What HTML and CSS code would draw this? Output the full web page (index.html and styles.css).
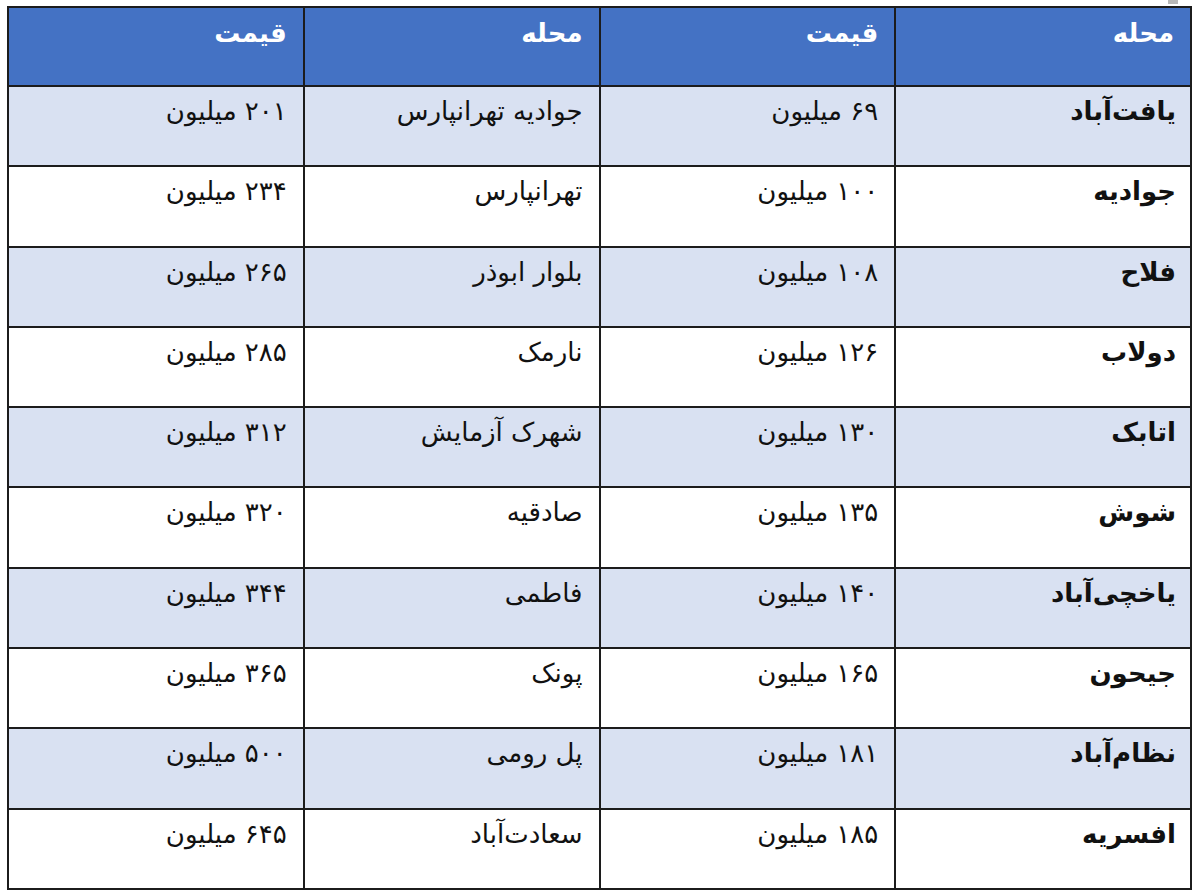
FILE: index.html
```html
<!DOCTYPE html>
<html lang="fa" dir="rtl">
<head>
<meta charset="utf-8">
<title>قیمت مسکن</title>
<link rel="stylesheet" href="styles.css">
</head>
<body>
<div class="page">
  <div class="corner-mark"></div>
  <table class="price-table">
    <thead>
      <tr class="head-row">
        <th>محله</th><th>قیمت</th><th>محله</th><th>قیمت</th>
      </tr>
    </thead>
    <tbody>
      <tr class="shaded"><td class="name">یافت‌آباد</td><td>۶۹ میلیون</td><td>جوادیه تهرانپارس</td><td>۲۰۱ میلیون</td></tr>
      <tr><td class="name">جوادیه</td><td>۱۰۰ میلیون</td><td>تهرانپارس</td><td>۲۳۴ میلیون</td></tr>
      <tr class="shaded"><td class="name">فلاح</td><td>۱۰۸ میلیون</td><td>بلوار ابوذر</td><td>۲۶۵ میلیون</td></tr>
      <tr><td class="name">دولاب</td><td>۱۲۶ میلیون</td><td>نارمک</td><td>۲۸۵ میلیون</td></tr>
      <tr class="shaded"><td class="name">اتابک</td><td>۱۳۰ میلیون</td><td>شهرک آزمایش</td><td>۳۱۲ میلیون</td></tr>
      <tr><td class="name">شوش</td><td>۱۳۵ میلیون</td><td>صادقیه</td><td>۳۲۰ میلیون</td></tr>
      <tr class="shaded"><td class="name">یاخچی‌آباد</td><td>۱۴۰ میلیون</td><td>فاطمی</td><td>۳۴۴ میلیون</td></tr>
      <tr><td class="name">جیحون</td><td>۱۶۵ میلیون</td><td>پونک</td><td>۳۶۵ میلیون</td></tr>
      <tr class="shaded"><td class="name">نظام‌آباد</td><td>۱۸۱ میلیون</td><td>پل رومی</td><td>۵۰۰ میلیون</td></tr>
      <tr><td class="name">افسریه</td><td>۱۸۵ میلیون</td><td>سعادت‌آباد</td><td>۶۴۵ میلیون</td></tr>
    </tbody>
  </table>
</div>
</body>
</html>
```

FILE: styles.css
```css
html, body {
  margin: 0;
  padding: 0;
  background: #ffffff;
}

.page {
  position: relative;
  width: 1200px;
  height: 895px;
  padding: 6px 8px 0 7px;
  box-sizing: border-box;
  direction: rtl;
}

.corner-mark {
  position: absolute;
  top: 0;
  right: 22px;
  width: 10px;
  height: 4px;
  background: #b8b8b8;
}

.price-table {
  width: 1185px;
  border-collapse: collapse;
  table-layout: fixed;
  direction: rtl;
  font-family: "DejaVu Sans", "Noto Sans", sans-serif;
  font-size: 26px;
  color: #111111;
}

.price-table th,
.price-table td {
  border: 2px solid #1c1c1c;
  text-align: right;
  vertical-align: top;
  padding: 9px 16px 0 16px;
  line-height: 30px;
  box-sizing: border-box;
}

.price-table td.name {
  padding-right: 14px;
}

.head-row {
  height: 79px;
  background: #4472c4;
}

.head-row th {
  color: #ffffff;
  font-weight: bold;
  padding-top: 10px;
}

.price-table tbody tr {
  height: 80.3px;
}

.price-table tbody tr.shaded {
  background: #d9e1f2;
}

.price-table td {
  font-weight: normal;
}

.price-table td.name {
  font-weight: bold;
}
```
